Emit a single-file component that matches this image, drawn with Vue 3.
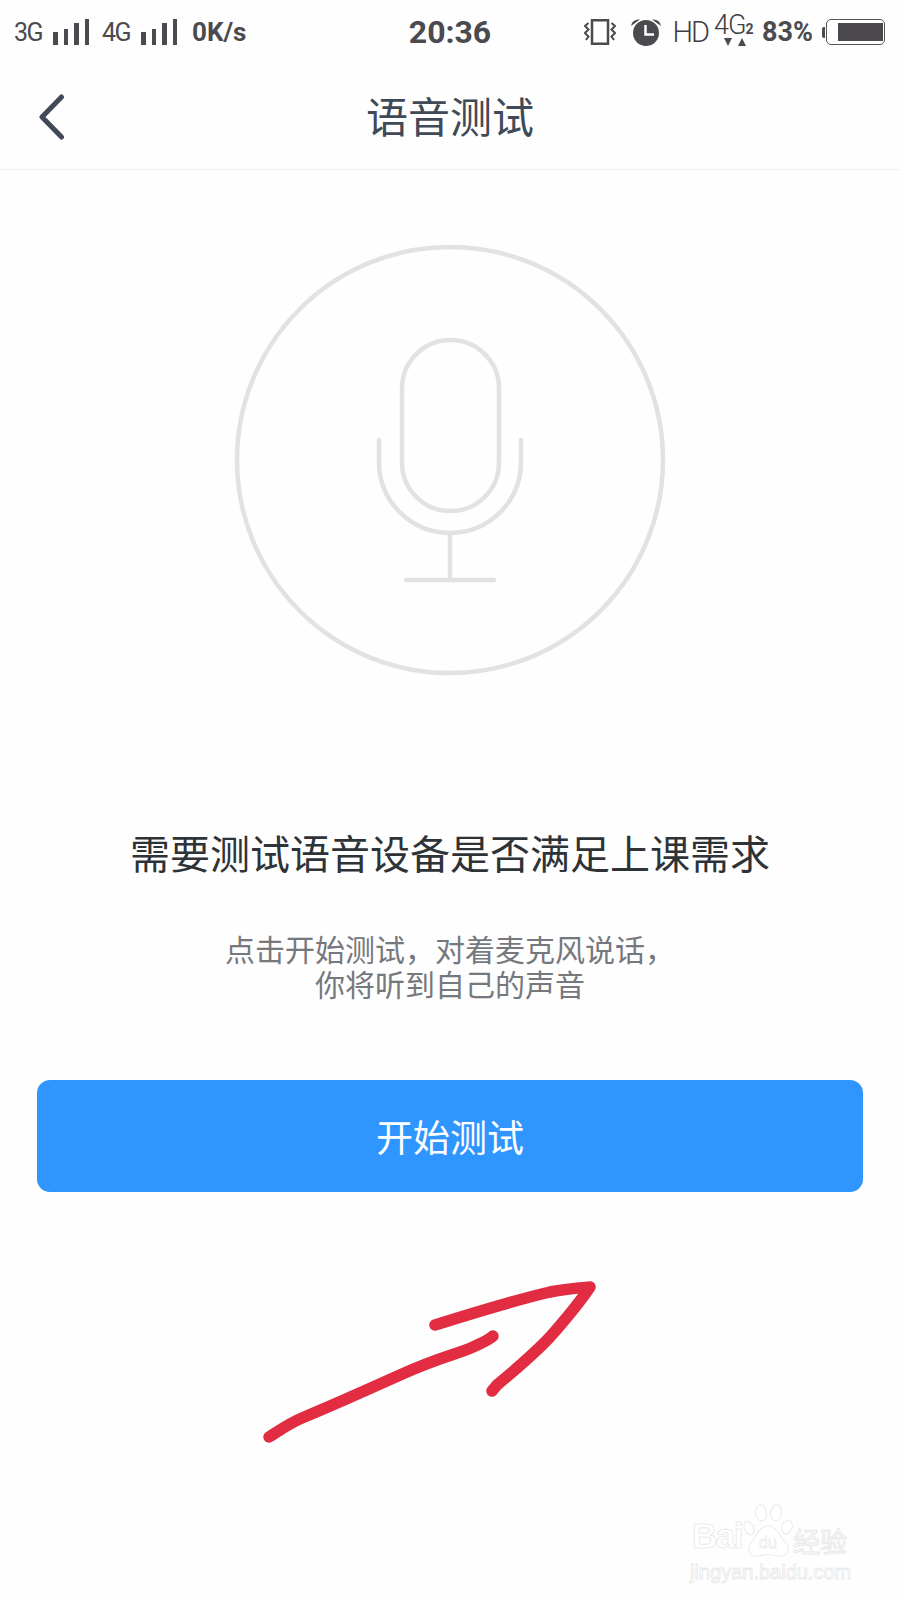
<script setup>
const signals = ['3G', '4G']
const barHeights = [13, 16, 22, 26]
</script>

<template>
  <div class="page">
    <div class="status">
      <div class="status-left">
        <template v-for="s in signals" :key="s">
          <span class="net">{{ s }}</span>
          <span class="bars">
            <i v-for="h in barHeights" :key="h" class="bar" :style="{ height: h + 'px' }"></i>
          </span>
        </template>
        <span class="speed">0K/s</span>
      </div>
      <div class="clock">20:36</div>
      <div class="status-right">
        <svg class="vibrate" width="32" height="26" viewBox="0 0 32 26" fill="none" stroke="#4a4a4f">
          <rect x="8" y="1.250" width="16" height="23.500" stroke-width="2.500" />
          <path d="M4.500 4 L1 7 L4.500 10.500 L1 14 L4.500 17.500 L2 21" stroke-width="2" />
          <path d="M27.500 4 L31 7 L27.500 10.500 L31 14 L27.500 17.500 L30 21" stroke-width="2" />
        </svg>
        <svg class="alarm" width="30" height="27" viewBox="0 0 30 27">
          <circle cx="15" cy="14" r="13" fill="#4a4a4f" />
          <path d="M0 7 Q1 0 9 0.500 Z M30 7 Q29 0 21 0.500 Z" fill="#4a4a4f" />
          <path d="M14.500 6 V15.500 H23" fill="none" stroke="#fff" stroke-width="2.500" />
        </svg>
        <span class="hd">HD</span>
        <span class="lte">
          <span class="lte-4g">4G</span><span class="lte-2">2</span>
          <svg class="lte-arrows" width="22" height="8" viewBox="0 0 22 8">
            <path d="M0 0 H8 L4 8 Z M14 8 L18 0 L22 8 Z" fill="#4a4a4f" />
          </svg>
        </span>
        <span class="pct">83%</span>
        <span class="nub"></span>
        <span class="battery"><span class="level"></span></span>
      </div>
    </div>

    <header class="nav">
      <svg class="back" width="30" height="46" viewBox="0 0 30 46" fill="none">
        <path d="M24.500 3 L5 23 L24.500 43" stroke="#3f4a56" stroke-width="5" stroke-linecap="round" stroke-linejoin="round" />
      </svg>
      <h1 class="title">语音测试</h1>
    </header>

    <main class="body">
      <svg class="mic" width="440" height="440" viewBox="230 240 440 440" fill="none" stroke="#e2e1e4" stroke-width="4.500">
        <circle cx="450" cy="460" r="213" />
        <rect x="402" y="340" width="97" height="171" rx="48.500" />
        <path d="M379 440 V462 A71 71 0 0 0 521 462 V440" stroke-linecap="round" />
        <path d="M450 535 V580" />
        <path d="M406 580 H494" stroke-linecap="round" />
      </svg>
      <h2 class="heading">需要测试语音设备是否满足上课需求</h2>
      <p class="sub">点击开始测试&#65292;对着麦克风说话&#65292;<br />你将听到自己的声音</p>
      <button class="start" type="button">开始测试</button>
    </main>

    <svg class="arrow" width="900" height="1600" viewBox="0 0 900 1600" fill="none" stroke="#e12c42" stroke-width="11.500" stroke-linecap="round" stroke-linejoin="round">
      <path d="M269 1437 C280 1430 290 1423 302 1418 S360 1393 400 1375 S455 1355 473 1347 S488 1340 493 1336" />
      <path d="M435 1325 C470 1314 520 1299 550 1292 C565 1289 578 1288 590 1287 C578 1305 565 1320 550 1337 C535 1353 515 1370 497 1385 L492 1391" />
    </svg>

    <div class="mark">
      <div class="mark-row">
        <span class="mark-bai">Bai</span>
        <svg class="paw" width="50" height="54" viewBox="0 0 50 54" fill="#fff" stroke="#ececec" stroke-width="1.200">
          <ellipse cx="6" cy="24" rx="4.500" ry="7" transform="rotate(-25 6 24)" />
          <ellipse cx="18" cy="9" rx="5.500" ry="8" transform="rotate(-8 18 9)" />
          <ellipse cx="33" cy="9" rx="5.500" ry="8" transform="rotate(8 33 9)" />
          <ellipse cx="44" cy="23" rx="5" ry="7" transform="rotate(22 44 23)" />
          <path d="M25 22 C34 22 38 34 43 39 C49 47 42 54 34 52 C28 50 22 50 16 52 C7 54 3 46 8 39 C13 33 16 22 25 22 Z" />
          <text x="25" y="44" text-anchor="middle" font-family="'Liberation Sans', sans-serif" font-size="16" stroke-width="0.800">du</text>
        </svg>
        <span class="mark-jy">经验</span>
      </div>
      <div class="mark-url">jingyan.baidu.com</div>
    </div>
  </div>
</template>

<style>
html, body { margin: 0; background: #fff; }
</style>

<style scoped>
.page {
  position: relative;
  width: 900px;
  height: 1600px;
  overflow: hidden;
  background: #fefefe;
  font-family: Roboto, "Noto Sans CJK SC", sans-serif;
}
.status {
  height: 64px;
  display: grid;
  grid-template-columns: 1fr auto 1fr;
  align-items: center;
  color: #4a4a4f;
}
.status-left {
  display: flex;
  align-items: center;
  padding-left: 14px;
}
.net {
  font-size: 25px;
  letter-spacing: -1.500px;
  width: 39px;
}
.bars {
  display: flex;
  align-items: flex-end;
  gap: 6px;
  height: 26px;
  width: 49px;
}
.bar {
  display: block;
  width: 4.500px;
  background: #4a4a4f;
}
.speed {
  font-size: 26px;
  font-weight: 700;
  margin-left: 2px;
}
.clock {
  font-size: 32px;
  font-weight: 700;
}
.status-right {
  display: flex;
  align-items: center;
  justify-content: flex-end;
  padding-right: 15px;
}
.vibrate { margin-right: 15px; }
.alarm { margin-right: 12px; }
.hd {
  font-size: 29px;
  font-weight: 300;
  letter-spacing: -2px;
  margin-right: 6px;
  color: #3d3d42;
}
.lte {
  position: relative;
  display: flex;
  align-items: flex-start;
  width: 40px;
  height: 46px;
  margin-right: 8px;
}
.lte-4g {
  font-size: 27px;
  font-weight: 300;
  letter-spacing: -1px;
  line-height: 38px;
  margin-top: -3px;
  color: #3d3d42;
}
.lte-2 {
  font-size: 14px;
  font-weight: 700;
  line-height: 16px;
  margin-top: 12px;
}
.lte-arrows {
  position: absolute;
  left: 10px;
  top: 29px;
}
.pct {
  font-size: 27px;
  font-weight: 700;
  margin-right: 9px;
}
.nub {
  width: 3px;
  height: 11px;
  border-radius: 2px 0 0 2px;
  background: #4a4a4f;
  margin-right: 1px;
}
.battery {
  box-sizing: border-box;
  width: 59px;
  height: 26px;
  border: 1.500px solid #55555a;
  border-radius: 5px;
  display: flex;
  align-items: center;
  justify-content: flex-end;
  padding-right: 1.500px;
}
.level {
  width: 45px;
  height: 18px;
  background: #4a484c;
}
.nav {
  position: relative;
  box-sizing: border-box;
  height: 106px;
  padding-bottom: 4px;
  border-bottom: 1px solid #efefef;
  display: flex;
  align-items: center;
  justify-content: center;
}
.back {
  position: absolute;
  left: 37px;
  top: 30px;
}
.title {
  margin: 0;
  font-size: 42px;
  font-weight: 400;
  color: #3f4a56;
  font-family: "Noto Sans CJK SC", sans-serif;
}
.body {
  display: flex;
  flex-direction: column;
  align-items: center;
  font-family: "Noto Sans CJK SC", sans-serif;
}
.mic {
  display: block;
  margin-top: 70px;
}
.heading {
  margin: 144px 0 0;
  font-size: 40px;
  line-height: 56px;
  font-weight: 400;
  color: #2e3338;
}
.sub {
  margin: 51px 0 0;
  font-size: 30px;
  line-height: 34.500px;
  color: #76787d;
  text-align: center;
}
.start {
  box-sizing: border-box;
  width: 826px;
  height: 112px;
  margin-top: 80px;
  border: 0;
  border-radius: 13px;
  background: #2f95ff;
  color: #fff;
  font-family: inherit;
  font-size: 37px;
}
.arrow {
  position: absolute;
  left: 0;
  top: 0;
}
.mark {
  position: absolute;
  left: 692px;
  top: 1503px;
  width: 164px;
}
.mark-row {
  display: flex;
  align-items: flex-end;
  height: 55px;
}
.mark-bai {
  width: 51px;
  font-family: "Liberation Sans", sans-serif;
  font-size: 35px;
  font-weight: 700;
  letter-spacing: -1.500px;
  line-height: 44px;
  color: #fff;
  -webkit-text-stroke: 1px #ececec;
}
.mark-jy {
  font-family: "Noto Sans CJK SC", sans-serif;
  font-size: 27px;
  line-height: 34px;
  color: #fff;
  -webkit-text-stroke: 1px #e8e8e8;
}
.mark-url {
  margin-top: 1px;
  margin-left: -2px;
  font-family: "Liberation Sans", sans-serif;
  font-size: 20px;
  line-height: 26px;
  color: #fff;
  -webkit-text-stroke: 0.800px #e8e8e8;
  white-space: nowrap;
}
</style>
